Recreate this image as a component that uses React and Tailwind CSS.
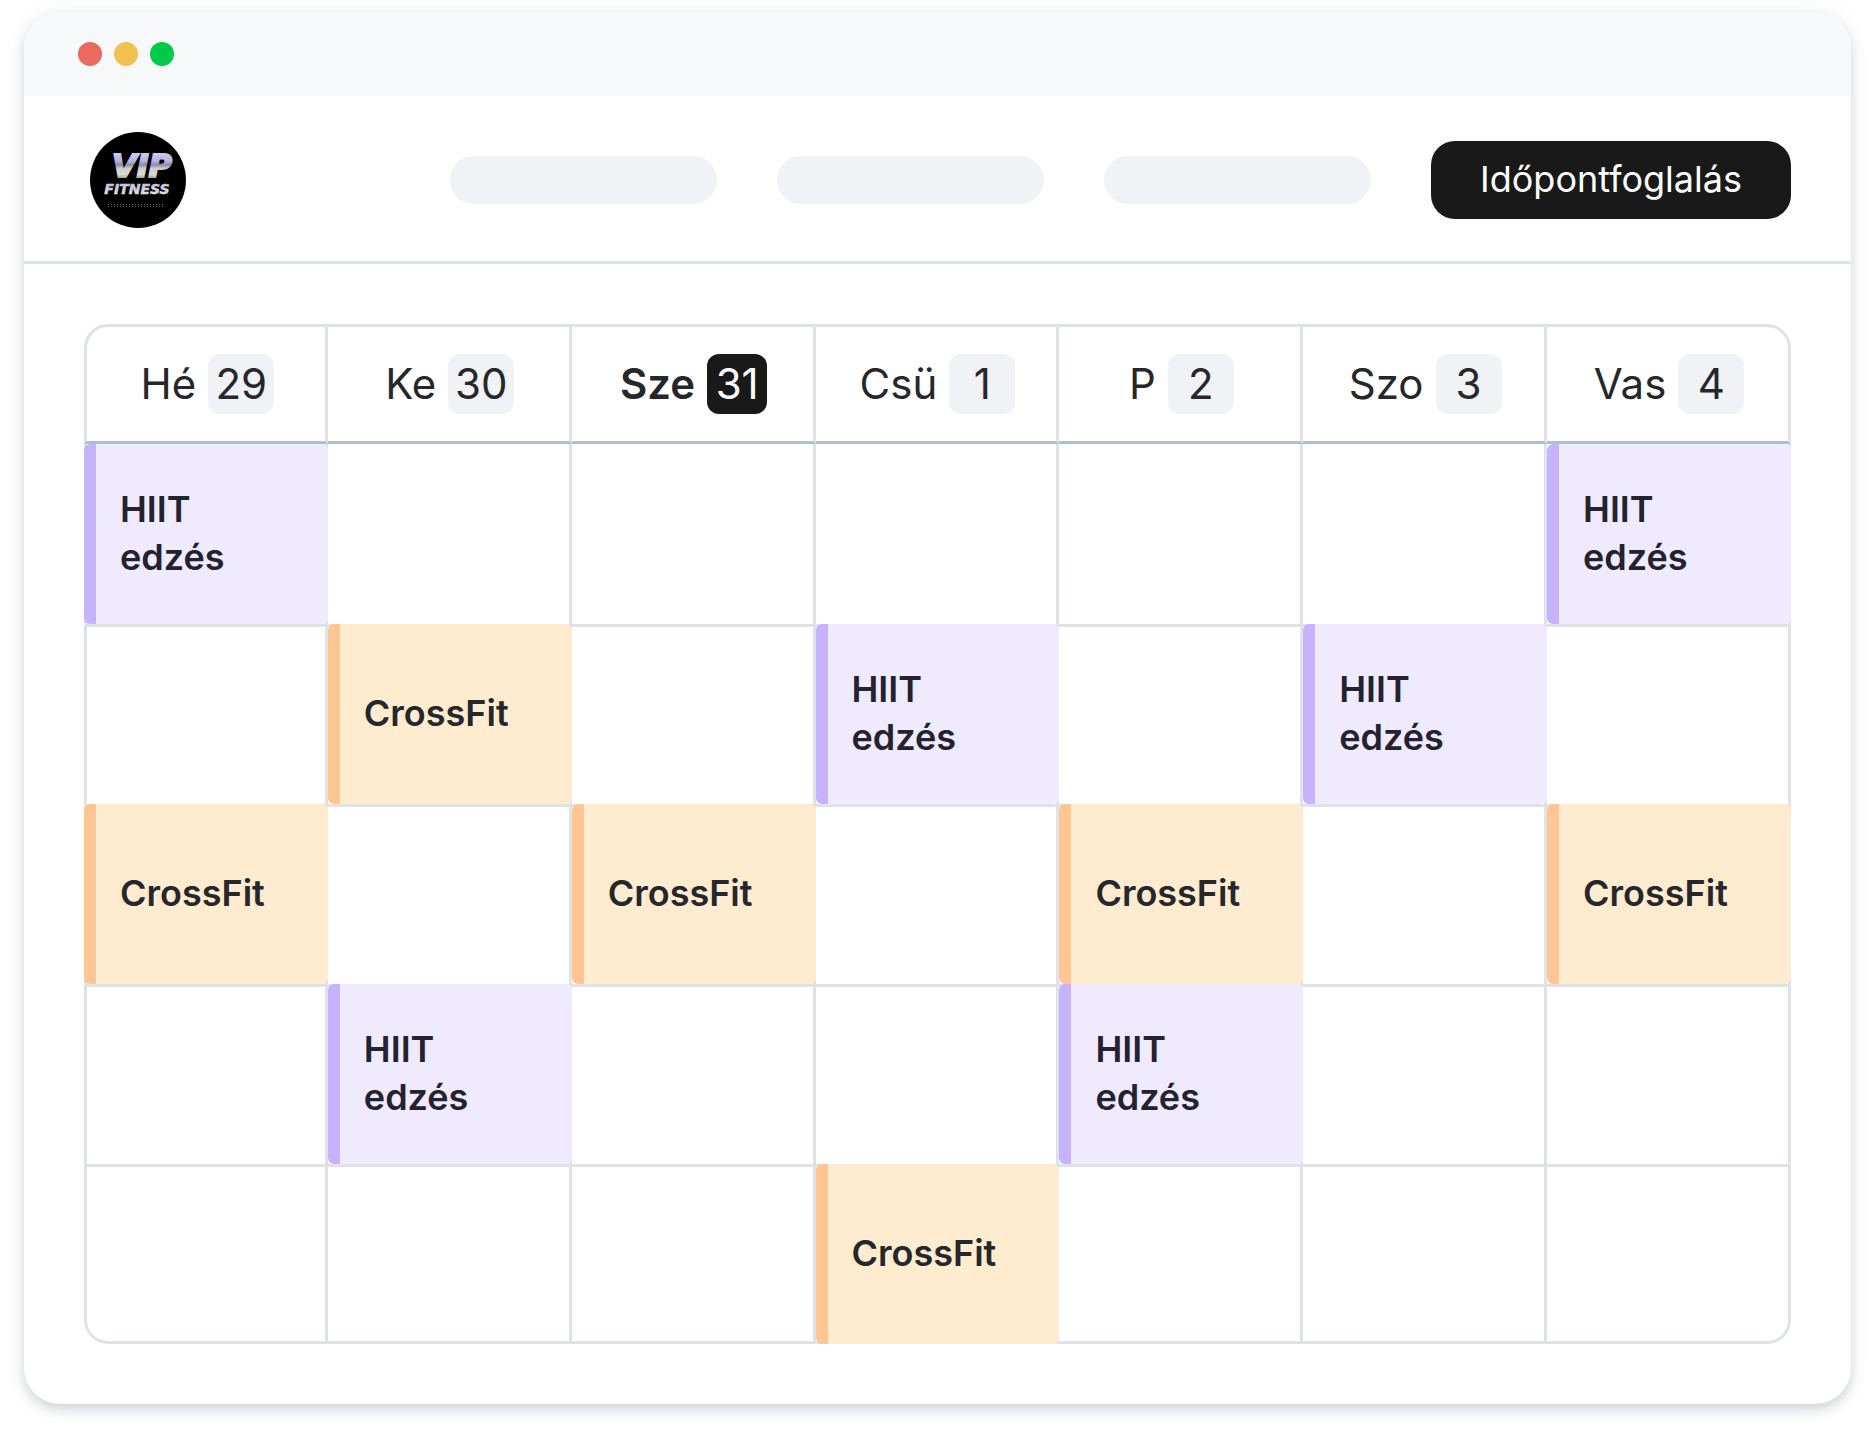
const days = [
  { name: "Hé", date: 29 },
  { name: "Ke", date: 30 },
  { name: "Sze", date: 31, today: true },
  { name: "Csü", date: 1 },
  { name: "P", date: 2 },
  { name: "Szo", date: 3 },
  { name: "Vas", date: 4 },
];

const HIIT = "HIIT edzés";
const CROSS = "CrossFit";

const weeks = [
  [HIIT, null, null, null, null, null, HIIT],
  [null, CROSS, null, HIIT, null, HIIT, null],
  [CROSS, null, CROSS, null, CROSS, null, CROSS],
  [null, HIIT, null, null, HIIT, null, null],
  [null, null, null, CROSS, null, null, null],
];

function Logo() {
  return (
    <svg viewBox="0 0 96 96" className="size-24 shrink-0" role="img" aria-label="VIP Fitness">
      <defs>
        <linearGradient id="chrome" gradientUnits="userSpaceOnUse" x1="0" y1="22" x2="0" y2="46">
          <stop offset="0" stopColor="#c9c8ee" />
          <stop offset="0.3" stopColor="#b3b2dc" />
          <stop offset="0.45" stopColor="#8a89ac" />
          <stop offset="0.6" stopColor="#cfcdcb" />
          <stop offset="0.85" stopColor="#dddbd0" />
          <stop offset="1" stopColor="#a8a698" />
        </linearGradient>
        <linearGradient id="silver" gradientUnits="userSpaceOnUse" x1="0" y1="52" x2="0" y2="63">
          <stop offset="0" stopColor="#c3c2e2" />
          <stop offset="1" stopColor="#e4e2da" />
        </linearGradient>
      </defs>
      <circle cx="48" cy="48" r="48" fill="#000" />
      <text fontFamily="DejaVu Sans, sans-serif" fontWeight="700" fontStyle="italic" textAnchor="middle">
        <tspan x="52" y="45" fontSize="32" fill="url(#chrome)" stroke="url(#chrome)" strokeWidth="2">
          VIP
        </tspan>
        <tspan x="47" y="62" fontSize="14" fill="url(#silver)" stroke="url(#silver)" strokeWidth="0.5">
          FITNESS
        </tspan>
      </text>
      <g stroke="#666" strokeWidth="1" strokeDasharray="1 2">
        <path d="M18 72.5H73" />
        <path d="M18 74.5H73" />
      </g>
    </svg>
  );
}

function Event({ title, first }) {
  const tone =
    title === HIIT
      ? "border-[#c7b2fe] bg-[#f0eafe] text-[#24222f]"
      : "border-[#ffc693] bg-[#ffebcf] text-[#25272b]";
  return (
    <div
      className={`flex h-[180px] items-center rounded-md border-l-12 pr-16 pb-0.5 pl-6 text-4xl leading-12 font-semibold ${tone} ${
        first ? "-ml-[3px]" : ""
      }`}
    >
      {title}
    </div>
  );
}

export default function App() {
  return (
    <div className="bg-white px-6 pt-3 pb-9 font-[Inter,sans-serif] text-[#25272b]">
      <div className="rounded-[36px] bg-white shadow-[0_6px_12px_rgba(71,85,105,0.22),0_0_24px_rgba(71,85,105,0.06)]">
        <div className="flex h-21 items-center gap-3 rounded-t-[36px] bg-[#f6f8fa] px-[54px]">
          <span className="size-6 rounded-full bg-[#ea6a5e]" />
          <span className="size-6 rounded-full bg-[#f3bf4f]" />
          <span className="size-6 rounded-full bg-[#00ca48]" />
        </div>

        <header className="flex h-42 items-center justify-between border-b-3 border-[#dfe4e9] pt-[3px] pr-15 pl-[66px]">
          <Logo />
          <nav className="flex items-center gap-15">
            <span className="h-12 w-[267px] rounded-full bg-[#f0f2f5]" />
            <span className="h-12 w-[267px] rounded-full bg-[#f0f2f5]" />
            <span className="h-12 w-[267px] rounded-full bg-[#f0f2f5]" />
            <button type="button" className="h-[78px] w-[360px] rounded-3xl bg-[#191919] pb-0.5 text-4xl text-white">
              Időpontfoglalás
            </button>
          </nav>
        </header>

        <main className="p-15">
          <table className="w-full table-fixed border-separate border-spacing-0">
            <thead>
              <tr>
                {days.map((day) => (
                  <th
                    key={day.name}
                    scope="col"
                    className="h-30 border-t-3 border-r-3 border-b-3 border-[#dfe3e8] border-b-[#b0bfce] p-0 font-normal first:rounded-tl-3xl first:border-l-3 last:rounded-tr-3xl"
                  >
                    <div className="flex items-center justify-center gap-3 pl-[3px] text-[42px] leading-15">
                      <span className={day.today ? "font-semibold" : ""}>{day.name}</span>
                      <span
                        className={`rounded-xl text-center ${
                          day.today ? "w-15 bg-[#191919] text-white" : "w-[66px] bg-[#f0f2f5]"
                        }`}
                      >
                        {day.date}
                      </span>
                    </div>
                  </th>
                ))}
              </tr>
            </thead>
            <tbody className="[&>tr:first-child>td]:border-t-0 [&>tr:last-child>td]:border-b-3 [&>tr:last-child>td:first-child]:rounded-bl-3xl [&>tr:last-child>td:last-child]:rounded-br-3xl">
              {weeks.map((week, row) => (
                <tr key={row}>
                  {week.map((title, col) => (
                    <td
                      key={col}
                      className="h-[180px] border-t-3 border-r-3 border-[#dfe3e8] p-0 align-top first:border-l-3"
                    >
                      {title && (
                        <div className={`-mr-[3px] ${row > 0 ? "-mt-[3px]" : ""} ${row === 4 ? "-mb-[3px]" : ""}`}>
                          <Event title={title} first={col === 0} />
                        </div>
                      )}
                    </td>
                  ))}
                </tr>
              ))}
            </tbody>
          </table>
        </main>
      </div>
    </div>
  );
}
